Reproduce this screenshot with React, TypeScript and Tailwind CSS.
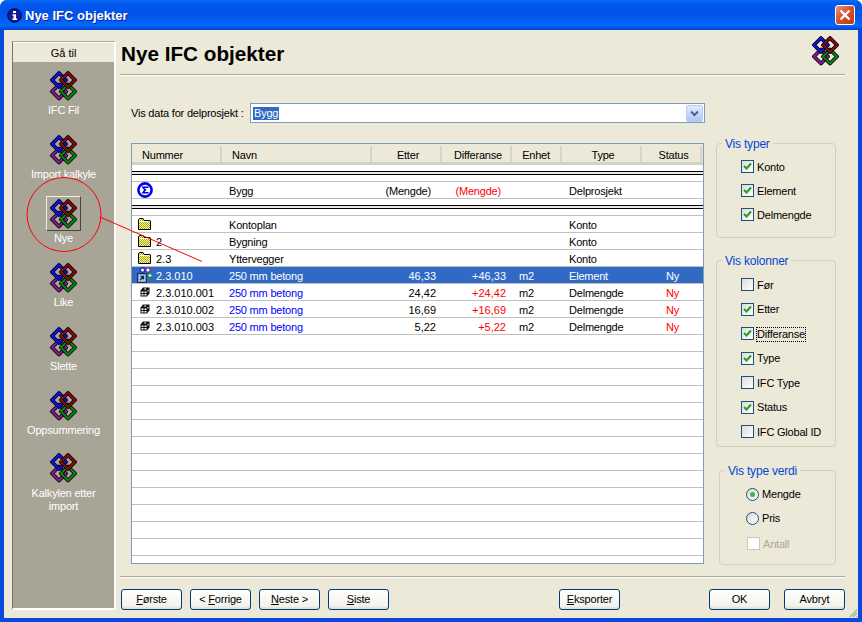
import React from "react";

const font = "font-['Liberation_Sans',Arial,sans-serif]";

const sideItems = ["IFC Fil", "Import kalkyle", "Nye", "Like", "Slette", "Oppsummering", "Kalkylen etter import"];

const columns = [
  { label: "Nummer", className: "pl-[10px]" },
  { label: "Navn", className: "pl-[10px]" },
  { label: "Etter", className: "justify-center pl-[4px]" },
  { label: "Differanse", className: "justify-center pl-[4px]" },
  { label: "Enhet", className: "justify-center" },
  { label: "Type", className: "justify-center pl-[4px]" },
  { label: "Status", className: "justify-center pl-[5px]" },
];

type Row = {
  icon: "folder" | "cube" | "element";
  nummer?: string;
  navn: string;
  etter?: string;
  diff?: string;
  enhet?: string;
  type: string;
  status?: string;
  selected?: boolean;
};

const rows: Row[] = [
  { icon: "folder", navn: "Kontoplan", type: "Konto" },
  { icon: "folder", nummer: "2", navn: "Bygning", type: "Konto" },
  { icon: "folder", nummer: "2.3", navn: "Yttervegger", type: "Konto" },
  { icon: "element", nummer: "2.3.010", navn: "250 mm betong", etter: "46,33", diff: "+46,33", enhet: "m2", type: "Element", status: "Ny", selected: true },
  { icon: "cube", nummer: "2.3.010.001", navn: "250 mm betong", etter: "24,42", diff: "+24,42", enhet: "m2", type: "Delmengde", status: "Ny" },
  { icon: "cube", nummer: "2.3.010.002", navn: "250 mm betong", etter: "16,69", diff: "+16,69", enhet: "m2", type: "Delmengde", status: "Ny" },
  { icon: "cube", nummer: "2.3.010.003", navn: "250 mm betong", etter: "5,22", diff: "+5,22", enhet: "m2", type: "Delmengde", status: "Ny" },
];

const gridCols = "grid grid-cols-[90px_150px_70px_70px_50px_80px_60px]";

function Diamond({ cx, cy, color }: { cx: number; cy: number; color: string }) {
  const d = `M${cx} ${cy - 7}L${cx + 7} ${cy}L${cx} ${cy + 7}L${cx - 7} ${cy}Z`;
  return (
    <>
      <path d={d} fill="none" stroke="#000" strokeWidth="3.800" strokeLinejoin="round" />
      <path d={d} fill="none" stroke={color} strokeWidth="2" strokeLinejoin="round" />
    </>
  );
}

function Logo() {
  return (
    <svg width="27" height="30" viewBox="0 0 27 30" className="block">
      <Diamond cx={9} cy={20.5} color="#8b1a9b" />
      <Diamond cx={18} cy={20.5} color="#0a8a12" />
      <Diamond cx={9} cy={9} color="#1010f0" />
      <Diamond cx={18} cy={9} color="#8a0c0c" />
    </svg>
  );
}

function Folder() {
  return (
    <svg width="13" height="12" viewBox="0 0 13 12" className="block">
      <defs>
        <pattern id="dither" width="2" height="2" patternUnits="userSpaceOnUse">
          <rect width="2" height="2" fill="#ffff66" />
          <rect width="1" height="1" fill="#a8a040" />
          <rect x="1" y="1" width="1" height="1" fill="#a8a040" />
        </pattern>
      </defs>
      <path d="M.5 11.500V1.500l1-1h3.500l1 2h6l.5.5v8.500z" fill="url(#dither)" stroke="#000" />
      <path d="M1.500 3.500h10" stroke="#fff" />
    </svg>
  );
}

function Cube() {
  return (
    <svg width="10" height="10" viewBox="0 0 10 10" className="block">
      <path d="M3 .5h6.500v6L7 9.500H.5v-6z" fill="#111" />
      <path d="M1.500 4.500h2v1.500h-2zM4.500 4.500h2v1.500h-2zM1.500 7h2v1.500h-2zM4.500 7h2v1.500h-2zM7.500 3h1v1.500h-1zM4.200 1.500h2v1h-2z" fill="#fff" />
    </svg>
  );
}

function ElementIcon() {
  return (
    <svg width="16" height="16" viewBox="0 0 16 16" className="block">
      <circle cx="5.500" cy="3" r="2.200" fill="#fff" stroke="#2030c0" strokeWidth="1.400" />
      <circle cx="11" cy="3" r="2.200" fill="#fff" stroke="#6a3aa8" strokeWidth="1.400" />
      <path d="M10.500 8.500l2.500-2.500 2.500 2.500-2.500 2.500z" fill="#fff" stroke="#1d8a5a" strokeWidth="1.400" />
      <rect x="0.500" y="6.500" width="9" height="9" fill="#7f9cc4" stroke="#16325c" />
      <rect x="2" y="8" width="6" height="6" fill="#b8cde8" />
      <path d="M3 13l3-3M3.500 9.500H6.500v3" fill="none" stroke="#10284c" strokeWidth="1.300" />
    </svg>
  );
}

function Sigma() {
  return (
    <svg width="16" height="16" viewBox="0 0 16 16" className="block">
      <circle cx="8" cy="8" r="6.600" fill="#fff" stroke="#0000f0" strokeWidth="2.600" />
      <path d="M4.500 4.500h7v1.500H7.500l2 2-2 2h4v1.500h-7L7 8z" fill="#0000d0" />
    </svg>
  );
}

function RowIcon({ icon }: { icon: Row["icon"] }) {
  if (icon === "folder") return <span className="ml-[1px]"><Folder /></span>;
  if (icon === "cube") return <span className="ml-[3px]"><Cube /></span>;
  return <ElementIcon />;
}

function TableRow({ row }: { row: Row }) {
  const sel = row.selected;
  return (
    <div className={`${gridCols} h-[17px] border-b items-center pt-[2px] border-[#c0c0c0] ${sel ? "bg-[#316ac5] text-white" : ""}`}>
      <div className="flex items-center">
        <span className="w-[24px] h-[16px] pl-[5px] -mt-[2px] flex items-center">
          <RowIcon icon={row.icon} />
        </span>
        <span className="tracking-normal">{row.nummer}</span>
      </div>
      <div className={`pl-[7px] ${row.etter && !sel ? "text-[#0000ff]" : ""}`}>{row.navn}</div>
      <div className="text-right pr-[6px] tracking-normal">{row.etter}</div>
      <div className={`text-right pr-[6px] tracking-normal ${sel ? "" : "text-[#ff0000]"}`}>{row.diff}</div>
      <div className="pl-[7px]">{row.enhet}</div>
      <div className="pl-[7px]">{row.type}</div>
      <div className={`pl-[24px] ${sel ? "" : "text-[#ff0000]"}`}>{row.status}</div>
    </div>
  );
}

function DoubleLine() {
  return <div className="h-[4px] border-y border-black bg-[#e8e8e8]" />;
}

function DataTable() {
  return (
    <div className="w-[573px] h-[421px] border border-[#7f9db9] bg-white overflow-hidden">
      <div className={`${gridCols} h-[21px] bg-[#ece9d8] border-b-[3px] border-[#d6d2c2]`}>
        {columns.map((c) => (
          <div key={c.label} className={`flex items-center border-r-2 border-r-[#d8d5c4] my-[2px] pt-[3px] ${c.className}`}>
            {c.label}
          </div>
        ))}
      </div>
      <div className="h-[6px]" />
      <DoubleLine />
      <div className="h-[7px] border-b border-[#c0c0c0]" />
      <div className={`${gridCols} h-[17px] border-b border-[#c0c0c0] items-center pt-[2px]`}>
        <div className="pl-[5px] -mt-[2px]">
          <Sigma />
        </div>
        <div className="pl-[7px]">Bygg</div>
        <div className="text-right pr-[11px]">(Mengde)</div>
        <div className="text-right pr-[11px] text-[#ff0000]">(Mengde)</div>
        <div />
        <div className="pl-[7px]">Delprosjekt</div>
        <div />
      </div>
      <div className="h-[6px]" />
      <DoubleLine />
      <div className="h-[7px] border-b border-[#c0c0c0]" />
      {rows.map((r, i) => (
        <TableRow key={i} row={r} />
      ))}
      {Array.from({ length: 13 }).map((_, i) => (
        <div key={i} className="h-[17px] border-b border-[#c0c0c0]" />
      ))}
    </div>
  );
}

function Checkbox({ label, checked, disabled, focus }: { label: string; checked?: boolean; disabled?: boolean; focus?: boolean }) {
  return (
    <div className="flex items-center h-[13px]">
      <span
        className={`w-[13px] h-[13px] border flex items-center justify-center ${
          disabled ? "border-[#cac8bb] bg-white" : "border-[#1c5180] bg-[linear-gradient(135deg,#dcdcd7,#ffffff)]"
        }`}
      >
        {checked && (
          <svg width="9" height="9" viewBox="0 0 9 9">
            <path d="M1 4l2.500 2.500L8 1.500" fill="none" stroke="#21a121" strokeWidth="2" />
          </svg>
        )}
      </span>
      <span className={`ml-[3px] mt-[1px] leading-[13px] ${disabled ? "text-[#aca899]" : ""} ${focus ? "outline-1 outline-dotted outline-black" : ""}`}>{label}</span>
    </div>
  );
}

function Radio({ label, checked }: { label: string; checked?: boolean }) {
  return (
    <div className="flex items-center h-[13px]">
      <span className="w-[13px] h-[13px] rounded-full border border-[#1c5180] bg-[linear-gradient(135deg,#dcdcd7,#ffffff)] flex items-center justify-center">
        {checked && <span className="w-[5px] h-[5px] rounded-full bg-[#3fb24a]" />}
      </span>
      <span className="ml-[3px] leading-[13px]">{label}</span>
    </div>
  );
}

function Group({ title, className, children }: { title: string; className: string; children: React.ReactNode }) {
  return (
    <div className={`relative border border-[#d0d0bf] rounded-[4px] ${className}`}>
      <span className="absolute -top-[6px] left-[5px] bg-[#ece9d8] px-[3px] leading-[13px] text-[#0046d5] text-[12px]">{title}</span>
      {children}
    </div>
  );
}

function Btn({ children, className = "" }: { children: React.ReactNode; className?: string }) {
  return (
    <div className={`w-[61px] h-[21px] flex items-center justify-center border border-[#003c74] rounded-[3px] bg-[linear-gradient(#ffffff,#f3f2ec_85%,#dcd8ca)] ${className}`}>
      <span>{children}</span>
    </div>
  );
}

export default function App() {
  return (
    <div className={`${font} relative w-[862px] h-[622px] overflow-hidden bg-white text-[11px] leading-[13px] tracking-[-0.2px] text-black`}>
      <div className="w-full h-full flex flex-col rounded-t-[7px] overflow-hidden bg-[#0a47dc]">
        {/* title bar */}
        <div className="h-[30px] shrink-0 flex items-center pl-[7px] pr-[7px] tracking-normal bg-[linear-gradient(#0a6af2,#0058ee_12%,#0054e8_45%,#0468f8_85%,#0050e0_94%,#0a3fc8)]">
          <svg width="15" height="15" viewBox="0 0 15 15" className="block">
            <circle cx="7.500" cy="7.500" r="6.800" fill="#101c9c" stroke="#05052e" />
            <path d="M6 3h3v2H6zM5.500 6.200H9v4.300h1v1.500H5.500v-1.500h1V7.700h-1z" fill="#fff" />
          </svg>
          <span className="ml-[3px] text-white font-bold text-[13px] [text-shadow:1px_1px_#0f1f99]">Nye IFC objekter</span>
          <div className="ml-auto w-[20px] h-[20px] rounded-[3px] border border-white bg-[linear-gradient(135deg,#e89a7e,#d9512b_45%,#c03a14)] flex items-center justify-center">
            <svg width="12" height="12" viewBox="0 0 12 12">
              <path d="M1.500 1.500l9 9M10.500 1.500l-9 9" stroke="#fff" strokeWidth="2.400" />
            </svg>
          </div>
        </div>

        {/* client area */}
        <div className="relative flex-1 mx-[4px] mb-[4px] bg-[#ece9d8] flex min-h-0">
          {/* sidebar */}
          <div className="ml-[8px] mt-[11px] mb-[8px] w-[104px] flex flex-col bg-[#a8a597] border-l border-t border-l-[#77745f] border-t-[#aca899] border-r-2 border-b-2 border-r-white border-b-white">
            <div className="h-[20px] shrink-0 bg-[#ece9d8] border-t border-white flex items-center justify-center pt-[1px] tracking-normal">Gå til</div>
            {sideItems.map((item) => (
              <div key={item} className="h-[64px] shrink-0 pt-[6px] flex flex-col items-center">
                <div
                  className={`w-[35px] h-[35px] flex items-center justify-center border ${
                    item === "Nye" ? "border-t-[#f0eee2] border-l-[#f0eee2] border-r-[#4a483c] border-b-[#4a483c]" : "border-transparent"
                  }`}
                >
                  <Logo />
                </div>
                <div className={`text-center text-white w-[84px] ${item.startsWith("Kalkylen") ? "mt-[3px]" : "mt-[1px]"}`}>{item}</div>
              </div>
            ))}
          </div>

          {/* main */}
          <div className="ml-[4px] w-[725px] pt-[6px] flex flex-col">
            <div className="h-[38px] shrink-0 flex justify-between">
              <h1 className="self-center pl-[1px] pb-[2px] font-bold text-[20.700px] leading-[24px] tracking-normal">Nye IFC objekter</h1>
              <div className="pr-[6px]">
                <Logo />
              </div>
            </div>
            <div className="h-[2px] shrink-0 bg-[#aca899] border-b border-white" />

            <div className="pl-[11px]">
              <div className="mt-[27px] flex items-center h-[20px]">
                <span className="w-[119px]">Vis data for delprosjekt :</span>
                <div className="w-[455px] h-[20px] border border-[#7f9db9] bg-white flex items-center pl-[2px] pr-[1px]">
                  <span className="bg-[#316ac5] text-white px-[1px]">Bygg</span>
                  <div className="ml-auto w-[17px] h-[17px] rounded-[2px] bg-[linear-gradient(#e1eafe,#aec8f7)] border border-[#bccdf5] flex items-center justify-center">
                    <svg width="9" height="7" viewBox="0 0 9 7">
                      <path d="M1 1.500l3.500 3.500L8 1.500" fill="none" stroke="#4d6185" strokeWidth="2" />
                    </svg>
                  </div>
                </div>
              </div>

              <div className="mt-[20px] flex">
                <DataTable />
                <div className="ml-[12px] w-[120px] flex flex-col">
                  <Group title="Vis typer" className="h-[95px] pl-[24px] pt-[16px] flex flex-col gap-[11px]">
                    <Checkbox label="Konto" checked />
                    <Checkbox label="Element" checked />
                    <Checkbox label="Delmengde" checked />
                  </Group>
                  <Group title="Vis kolonner" className="mt-[22px] h-[187px] pl-[24px] pt-[17px] flex flex-col gap-[11.500px]">
                    <Checkbox label="Før" />
                    <Checkbox label="Etter" checked />
                    <Checkbox label="Differanse" checked focus />
                    <Checkbox label="Type" checked />
                    <Checkbox label="IFC Type" />
                    <Checkbox label="Status" checked />
                    <Checkbox label="IFC Global ID" />
                  </Group>
                  <Group title="Vis type verdi" className="mt-[23px] ml-[3px] h-[95px] pl-[26px] pt-[17px] flex flex-col gap-[11px]">
                    <Radio label="Mengde" checked />
                    <Radio label="Pris" />
                    <div className="ml-[1px] mt-[1px]">
                      <Checkbox label="Antall" disabled />
                    </div>
                  </Group>
                </div>
              </div>
            </div>

            <div className="mt-[11px] h-[2px] shrink-0 bg-[#aca899] border-b border-white" />

            <div className="mt-[11px] flex pl-[1px]">
              <Btn><span className="underline">F</span>ørste</Btn>
              <Btn className="ml-[8px]">&lt; <span className="underline">F</span>orrige</Btn>
              <Btn className="ml-[8px]"><span className="underline">N</span>este &gt;</Btn>
              <Btn className="ml-[8px]"><span className="underline">S</span>iste</Btn>
              <Btn className="ml-[170px]"><span className="underline">E</span>ksporter</Btn>
              <Btn className="ml-[89px]">OK</Btn>
              <Btn className="ml-[14px]">Avbryt</Btn>
            </div>
          </div>

          {/* resize grip */}
          <svg width="10" height="10" viewBox="0 0 10 10" className="absolute right-0 bottom-0">
            <path d="M9 2L2 9M9 5L5 9M9 8L8 9" stroke="#aca899" strokeWidth="1.200" />
          </svg>
        </div>
      </div>

      {/* red annotation drawn over the dialog */}
      <svg width="862" height="622" viewBox="0 0 862 622" className="absolute inset-0 pointer-events-none">
        <circle cx="64" cy="214.500" r="37" fill="none" stroke="#ff0000" />
        <path d="M100 217L202 261.500" stroke="#ff0000" />
      </svg>
    </div>
  );
}
